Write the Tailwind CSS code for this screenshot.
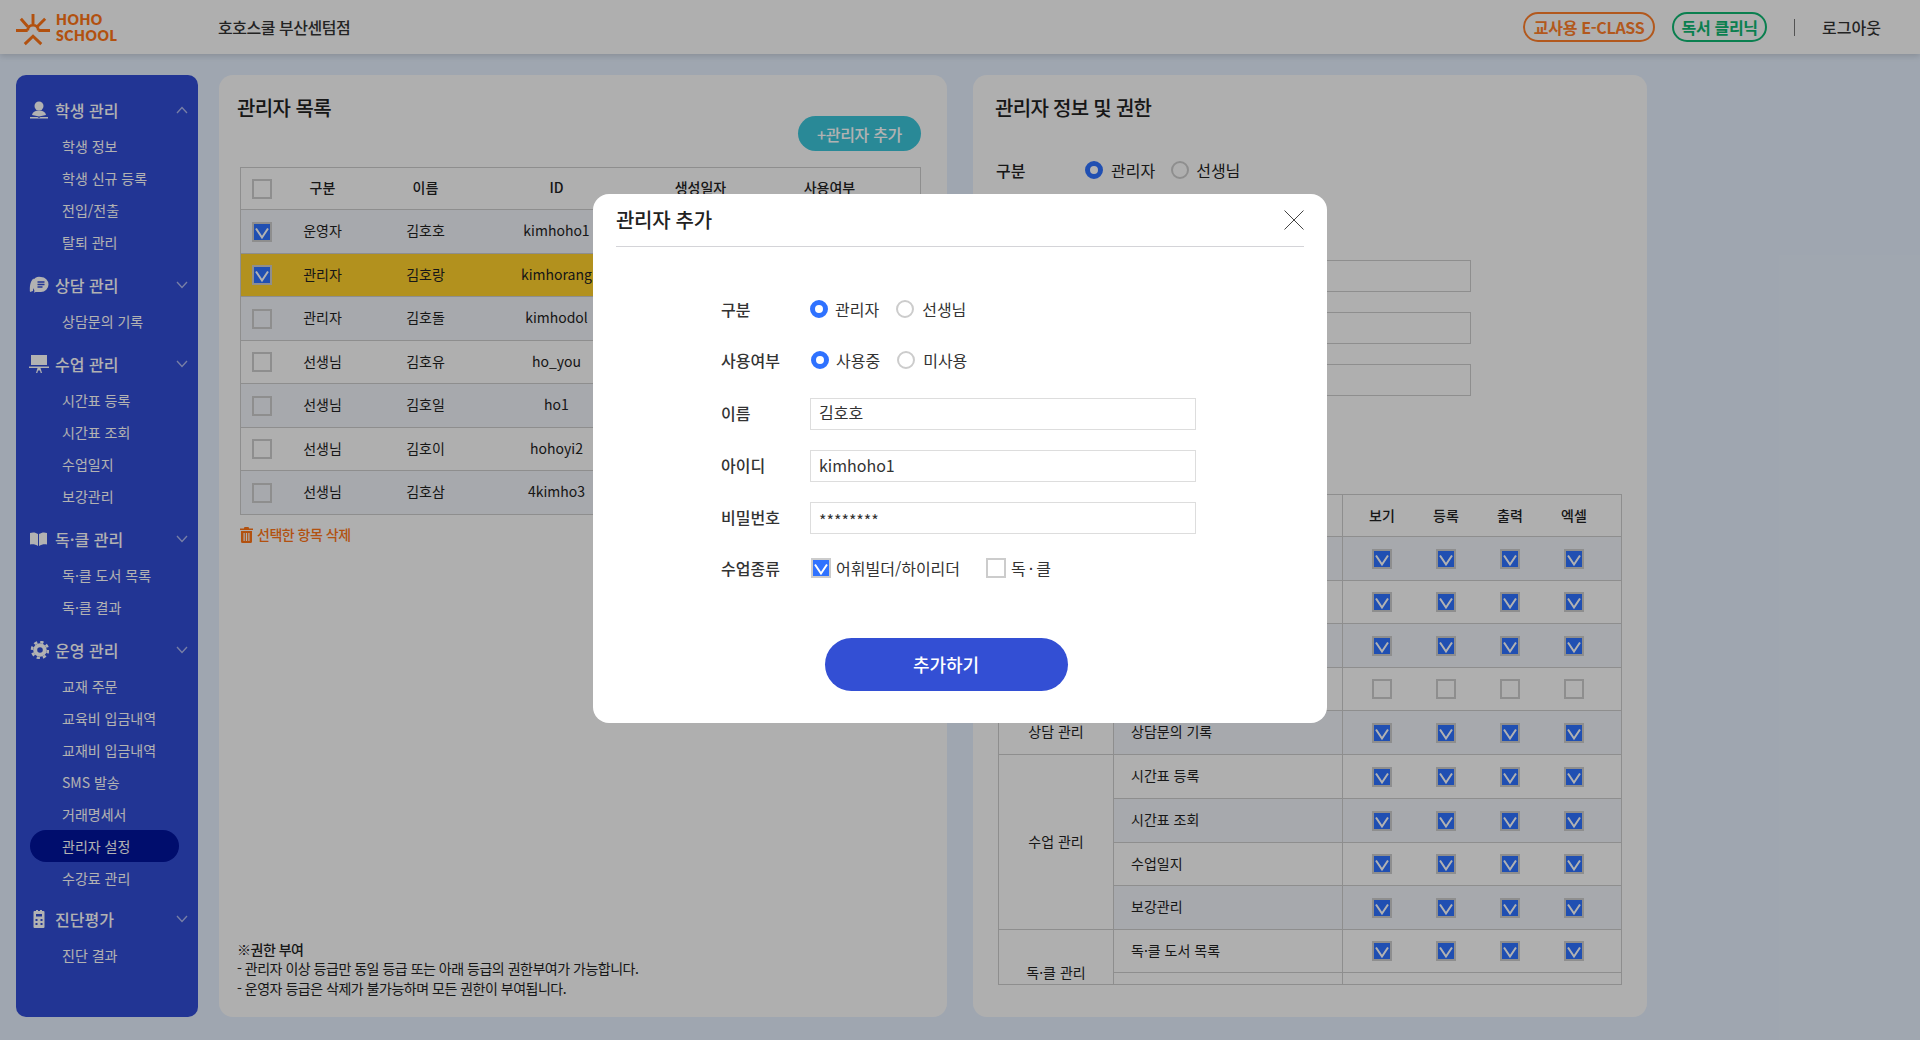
<!DOCTYPE html>
<html lang="ko">
<head>
<meta charset="utf-8">
<title>관리자 설정</title>
<script src="https://cdn.jsdelivr.net/npm/@tailwindcss/browser@4"></script>
</head>
<body class="m-0 h-[1040px] w-[1920px] overflow-hidden bg-[#e4eefc] font-['Noto_Sans_CJK_KR','Noto_Sans',sans-serif] text-[#222] relative">
<svg class="hidden"><symbol id="chk" viewBox="0 0 16 16"><path d="M2 4.500l6 9 6-9" fill="none" stroke="currentColor" stroke-width="2"/></symbol>
<symbol id="chev" viewBox="0 0 12 8"><path d="M1 1l5 5.500L11 1" fill="none" stroke="currentColor" stroke-width="1.300"/></symbol></svg>

<header class="h-[54px] bg-[#fbfbfb] flex items-center shadow-[0_2px_6px_rgba(0,0,0,0.15)] relative">
  <div class="w-[218px] pl-4 flex items-center gap-[5px]">
    <svg class="w-[35px] h-[35px] mt-[4px]" viewBox="16 9 36 34" fill="none" stroke="#ff7516" stroke-width="3"><path d="M16 27h12M39 27h12M33.500 10v11M21 15l7 8M46 15l-8 8M28 27a5.500 5.500 0 0 1 11 0M25 41l8.500-8 8.500 8"/></svg>
    <div class="font-['Lato',sans-serif] font-extrabold text-[14px] leading-[16px] tracking-[0.04em] text-[#ff7516] mt-[1px]"><div>HOHO</div><div>SCHOOL</div></div>
  </div>
  <div class="text-[16px] font-medium tracking-[-0.03em] text-[#333]">호호스쿨 부산센텀점</div>
  <div class="ml-auto pr-[39px] flex items-center">
    <div class="h-[30px] w-[132px] rounded-full border-2 border-[#ff7f2a] text-[#ff7f2a] text-[16px] font-bold tracking-[-0.02em] flex items-center justify-center">교사용 E-CLASS</div>
    <div class="ml-[17px] h-[30px] w-[95px] rounded-full border-2 border-[#0fb772] text-[#0fb772] text-[16px] font-bold tracking-[-0.02em] flex items-center justify-center">독서 클리닉</div>
    <div class="ml-[27px] w-px h-[17px] bg-[#777]"></div>
    <div class="ml-[27px] text-[16px] font-medium text-[#333]">로그아웃</div>
  </div>
</header>

<main class="flex pt-[21px] pl-4 gap-[21px]">
  <!-- sidebar -->
  <nav class="w-[182px] h-[942px] rounded-[10px] bg-[#324cd4] pt-[15px] text-white shrink-0">
    <div class="h-10 flex items-center pl-[13px] pr-[10px] text-[16px] font-medium">
      <svg class="w-[20px] h-[18px] mr-[6px]" viewBox="0 0 20 18" fill="currentColor"><circle cx="10" cy="5" r="4.500"/><path d="M3 14c.5-3 3-4.500 7-4.500s6.500 1.500 7 4.500l-7 1.500z"/><path d="M1 16h7.500l1.500 1 1.500-1H19v1.500H1z"/></svg>
      <span>학생 관리</span>
      <svg class="w-[12px] h-[8px] ml-auto text-white/60 rotate-180"><use href="#chev"/></svg>
    </div>
    <a class="block h-8 leading-8 pl-[46px] text-[14px]">학생 정보</a>
    <a class="block h-8 leading-8 pl-[46px] text-[14px]">학생 신규 등록</a>
    <a class="block h-8 leading-8 pl-[46px] text-[14px]">전입/전출</a>
    <a class="block h-8 leading-8 pl-[46px] text-[14px]">탈퇴 관리</a>

    <div class="mt-[7px] h-10 flex items-center pl-[13px] pr-[10px] text-[16px] font-medium">
      <svg class="w-[20px] h-[18px] mr-[6px]" viewBox="0 0 20 18" fill="currentColor"><path d="M5 2.500C.5 4 .5 14 1 16l3-1z"/><path d="M12 1a7.500 7.500 0 0 1 0 15H7c-.5 0-1 .5-2 .5 .5-1 .5-2 0-3A7.500 7.500 0 0 1 12 1z"/><path d="M8.500 6h7M8.500 8.500h7M8.500 11h5" stroke="#324cd4" stroke-width="1.300"/></svg>
      <span>상담 관리</span>
      <svg class="w-[12px] h-[8px] ml-auto text-white/60"><use href="#chev"/></svg>
    </div>
    <a class="block h-8 leading-8 pl-[46px] text-[14px]">상담문의 기록</a>

    <div class="mt-[7px] h-10 flex items-center pl-[13px] pr-[10px] text-[16px] font-medium">
      <svg class="w-[20px] h-[18px] mr-[6px]" viewBox="0 0 20 18" fill="currentColor"><path d="M2 0h16v10H2z"/><path d="M0 11.500h20V13H0z"/><path d="M7 18l1.500-5h3L13 18h-1.300l-.7-2.500H9L8.300 18z"/></svg>
      <span>수업 관리</span>
      <svg class="w-[12px] h-[8px] ml-auto text-white/60"><use href="#chev"/></svg>
    </div>
    <a class="block h-8 leading-8 pl-[46px] text-[14px]">시간표 등록</a>
    <a class="block h-8 leading-8 pl-[46px] text-[14px]">시간표 조회</a>
    <a class="block h-8 leading-8 pl-[46px] text-[14px]">수업일지</a>
    <a class="block h-8 leading-8 pl-[46px] text-[14px]">보강관리</a>

    <div class="mt-[7px] h-10 flex items-center pl-[13px] pr-[10px] text-[16px] font-medium">
      <svg class="w-[20px] h-[18px] mr-[6px]" viewBox="0 0 20 18" fill="currentColor"><path d="M1 3c3-1 6-.5 8 1v12c-2-1.500-5-2-8-1.500z"/><path d="M18 3c-3-1-5.500-.5-8 1v12c2.500-1.500 5-2 8-1.500z"/></svg>
      <span>독·클 관리</span>
      <svg class="w-[12px] h-[8px] ml-auto text-white/60"><use href="#chev"/></svg>
    </div>
    <a class="block h-8 leading-8 pl-[46px] text-[14px]">독·클 도서 목록</a>
    <a class="block h-8 leading-8 pl-[46px] text-[14px]">독·클 결과</a>

    <div class="mt-[7px] h-10 flex items-center pl-[13px] pr-[10px] text-[16px] font-medium">
      <svg class="w-[20px] h-[18px] mr-[6px]" viewBox="0 0 20 18" fill="none" stroke="currentColor"><circle cx="11" cy="9" r="4.800" stroke-width="4"/><circle cx="11" cy="9" r="8" stroke-width="2.500" stroke-dasharray="3.300 2.980"/></svg>
      <span>운영 관리</span>
      <svg class="w-[12px] h-[8px] ml-auto text-white/60"><use href="#chev"/></svg>
    </div>
    <a class="block h-8 leading-8 pl-[46px] text-[14px]">교재 주문</a>
    <a class="block h-8 leading-8 pl-[46px] text-[14px]">교육비 입금내역</a>
    <a class="block h-8 leading-8 pl-[46px] text-[14px]">교재비 입금내역</a>
    <a class="block h-8 leading-8 pl-[46px] text-[14px]">SMS 발송</a>
    <a class="block h-8 leading-8 pl-[46px] text-[14px]">거래명세서</a>
    <a class="block h-8 leading-8 pl-[32px] ml-[14px] mr-[19px] text-[14px] rounded-full bg-[#00139d]">관리자 설정</a>
    <a class="block h-8 leading-8 pl-[46px] text-[14px]">수강료 관리</a>

    <div class="mt-[5px] h-10 flex items-center pl-[13px] pr-[10px] text-[16px] font-medium">
      <svg class="w-[20px] h-[18px] mr-[6px]" viewBox="0 0 20 18" fill="currentColor"><path fill-rule="evenodd" d="M5.500 1h1.500V0h2v1h2V0h2v1h1.500a1 1 0 0 1 1 1v15a1 1 0 0 1-1 1h-9a1 1 0 0 1-1-1V2a1 1 0 0 1 1-1zM7 4v2.500h6V4zM6.500 9v2h2V9zm5 0v2h2V9zm-5 4v2h2v-2zm5 0v2h2v-2z"/></svg>
      <span>진단평가</span>
      <svg class="w-[12px] h-[8px] ml-auto text-white/60"><use href="#chev"/></svg>
    </div>
    <a class="block h-8 leading-8 pl-[46px] text-[14px]">진단 결과</a>
  </nav>

  <!-- admin list panel -->
  <section class="w-[728px] h-[942px] rounded-[14px] bg-[#fbfbfb] pt-[20px] px-[18px] shrink-0 relative flex flex-col">
    <h2 class="text-[20px] leading-[26px] font-medium tracking-[-0.03em]">관리자 목록</h2>
    <div class="flex justify-end mt-[-5px] pr-[8px]">
      <button class="w-[123px] h-[35px] rounded-full bg-[#3cc5d9] text-white text-[16px] font-medium tracking-[-0.02em]">+관리자 추가</button>
    </div>
    <table class="ml-[3px] mt-[16px] w-[681px] table-fixed border-collapse text-[14px] text-center [&_td:not(:first-child)]:pb-[2px]">
      <colgroup><col class="w-[43px]"><col class="w-[78px]"><col class="w-[128px]"><col class="w-[134px]"><col class="w-[154px]"><col class="w-[104px]"><col></colgroup>
      <tr class="h-[42px] font-medium">
        <td class="border-y border-l border-[#ccc]"><div class="size-5 ml-[11px] border-2 border-[#ccc]"></div></td>
        <td class="border-y border-[#ccc]">구분</td><td class="border-y border-[#ccc]">이름</td><td class="border-y border-[#ccc]">ID</td><td class="border-y border-[#ccc]">생성일자</td><td class="border-y border-[#ccc]">사용여부</td><td class="border-y border-r border-[#ccc]"></td>
      </tr>
      <tr class="h-[44px] bg-[#f0f2f8]">
        <td class="border-y border-l border-[#ccc]"><div class="size-5 ml-[11px] border-2 border-[#ccc] bg-[#2f72ff] text-white"><svg class="size-4"><use href="#chk"/></svg></div></td>
        <td class="border-y border-[#ccc]">운영자</td><td class="border-y border-[#ccc]">김호호</td><td class="border-y border-[#ccc]">kimhoho1</td><td class="border-y border-[#ccc]"></td><td class="border-y border-[#ccc]"></td><td class="border-y border-r border-[#ccc]"></td>
      </tr>
      <tr class="h-[43px] bg-[#ffd02c]">
        <td class="border-y border-l border-[#ccc]"><div class="size-5 ml-[11px] border-2 border-[#ccc] bg-[#2f72ff] text-white"><svg class="size-4"><use href="#chk"/></svg></div></td>
        <td class="border-y border-[#ccc]">관리자</td><td class="border-y border-[#ccc]">김호랑</td><td class="border-y border-[#ccc]">kimhorang</td><td class="border-y border-[#ccc]"></td><td class="border-y border-[#ccc]"></td><td class="border-y border-r border-[#ccc]"></td>
      </tr>
      <tr class="h-[44px] bg-[#f0f2f8]">
        <td class="border-y border-l border-[#ccc]"><div class="size-5 ml-[11px] border-2 border-[#ccc]"></div></td>
        <td class="border-y border-[#ccc]">관리자</td><td class="border-y border-[#ccc]">김호돌</td><td class="border-y border-[#ccc]">kimhodol</td><td class="border-y border-[#ccc]"></td><td class="border-y border-[#ccc]"></td><td class="border-y border-r border-[#ccc]"></td>
      </tr>
      <tr class="h-[43px]">
        <td class="border-y border-l border-[#ccc]"><div class="size-5 ml-[11px] border-2 border-[#ccc]"></div></td>
        <td class="border-y border-[#ccc]">선생님</td><td class="border-y border-[#ccc]">김호유</td><td class="border-y border-[#ccc]">ho_you</td><td class="border-y border-[#ccc]"></td><td class="border-y border-[#ccc]"></td><td class="border-y border-r border-[#ccc]"></td>
      </tr>
      <tr class="h-[44px] bg-[#f0f2f8]">
        <td class="border-y border-l border-[#ccc]"><div class="size-5 ml-[11px] border-2 border-[#ccc]"></div></td>
        <td class="border-y border-[#ccc]">선생님</td><td class="border-y border-[#ccc]">김호일</td><td class="border-y border-[#ccc]">ho1</td><td class="border-y border-[#ccc]"></td><td class="border-y border-[#ccc]"></td><td class="border-y border-r border-[#ccc]"></td>
      </tr>
      <tr class="h-[43px]">
        <td class="border-y border-l border-[#ccc]"><div class="size-5 ml-[11px] border-2 border-[#ccc]"></div></td>
        <td class="border-y border-[#ccc]">선생님</td><td class="border-y border-[#ccc]">김호이</td><td class="border-y border-[#ccc]">hohoyi2</td><td class="border-y border-[#ccc]"></td><td class="border-y border-[#ccc]"></td><td class="border-y border-r border-[#ccc]"></td>
      </tr>
      <tr class="h-[44px] bg-[#f0f2f8]">
        <td class="border-y border-l border-[#ccc]"><div class="size-5 ml-[11px] border-2 border-[#ccc]"></div></td>
        <td class="border-y border-[#ccc]">선생님</td><td class="border-y border-[#ccc]">김호삼</td><td class="border-y border-[#ccc]">4kimho3</td><td class="border-y border-[#ccc]"></td><td class="border-y border-[#ccc]"></td><td class="border-y border-r border-[#ccc]"></td>
      </tr>
    </table>
    <div class="ml-[3px] mt-[9px] flex items-center gap-[4px] text-[14px] font-medium tracking-[-0.035em] text-[#ff7516]">
      <svg class="w-[13px] h-[16px]" viewBox="0 0 13 16" fill="currentColor"><path fill-rule="evenodd" d="M4.500 0h4l.7 1.500H13V3H0V1.500h3.800zM1 4h11v10.500a1.500 1.500 0 0 1-1.500 1.500h-8A1.500 1.500 0 0 1 1 14.500zM3.500 6v8h1.200V6zm2.400 0v8h1.200V6zm2.400 0v8h1.200V6z"/></svg>
      <span>선택한 항목 삭제</span>
    </div>
    <div class="mt-auto mb-[19px] text-[14px] leading-[19.500px] tracking-[-0.035em] text-[#222]">
      <div class="font-medium">※권한 부여</div>
      <div>- 관리자 이상 등급만 동일 등급 또는 아래 등급의 권한부여가 가능합니다.</div>
      <div>- 운영자 등급은 삭제가 불가능하며 모든 권한이 부여됩니다.</div>
    </div>
  </section>

  <!-- admin info panel -->
  <section class="ml-[5px] w-[674px] h-[942px] rounded-[14px] bg-[#fbfbfb] pt-[20px] pl-[22px] shrink-0 relative">
    <h2 class="text-[20px] leading-[26px] font-medium tracking-[-0.035em]">관리자 정보 및 권한</h2>
    <div class="mt-[37px] flex items-center h-6 text-[16px]">
      <span class="w-[90px] font-medium pl-[1px]">구분</span>
      <span class="size-[18px] rounded-full border-[5px] border-[#2f72ff] bg-white"></span><span class="ml-[8px]">관리자</span>
      <span class="ml-[16px] size-[18px] rounded-full border-2 border-[#ccc]"></span><span class="ml-[7px]">선생님</span>
    </div>
    <div class="ml-[90px] mt-[78px] w-[386px] h-8 border border-[#ccc]"></div>
    <div class="ml-[90px] mt-5 w-[386px] h-8 border border-[#ccc]"></div>
    <div class="ml-[90px] mt-5 w-[386px] h-8 border border-[#ccc]"></div>
    <div class="ml-[3px] mt-[98px] w-[624px] h-[491px] overflow-hidden border-b border-[#ccc]">
      <table class="w-[624px] table-fixed border-collapse text-[14px] [&_td:not(:last-child)]:pb-[2px]">
        <colgroup><col class="w-[115px]"><col class="w-[229px]"><col></colgroup>
        <tr class="h-[42px] font-medium text-center"><td class="border border-[#ccc]">메뉴</td><td class="border border-[#ccc]">상세 메뉴</td>
          <td class="border border-[#ccc]"><div class="flex pl-[7px]"><span class="w-16">보기</span><span class="w-16">등록</span><span class="w-16">출력</span><span class="w-16">엑셀</span></div></td></tr>
        <tr class="h-[44px] bg-[#f0f2f8]"><td rowspan="4" class="border border-[#ccc] bg-[#fbfbfb] text-center">학생 관리</td><td class="border border-[#ccc] pl-[17px]">학생 정보</td>
          <td class="border border-[#ccc]"><div class="flex pl-[7px]"><span class="w-16 flex justify-center"><span class="size-5 border-2 border-[#ccc] bg-[#2f72ff] text-white"><svg class="size-4"><use href="#chk"/></svg></span></span><span class="w-16 flex justify-center"><span class="size-5 border-2 border-[#ccc] bg-[#2f72ff] text-white"><svg class="size-4"><use href="#chk"/></svg></span></span><span class="w-16 flex justify-center"><span class="size-5 border-2 border-[#ccc] bg-[#2f72ff] text-white"><svg class="size-4"><use href="#chk"/></svg></span></span><span class="w-16 flex justify-center"><span class="size-5 border-2 border-[#ccc] bg-[#2f72ff] text-white"><svg class="size-4"><use href="#chk"/></svg></span></span></div></td></tr>
        <tr class="h-[43px]"><td class="border border-[#ccc] pl-[17px]">학생 신규 등록</td>
          <td class="border border-[#ccc]"><div class="flex pl-[7px]"><span class="w-16 flex justify-center"><span class="size-5 border-2 border-[#ccc] bg-[#2f72ff] text-white"><svg class="size-4"><use href="#chk"/></svg></span></span><span class="w-16 flex justify-center"><span class="size-5 border-2 border-[#ccc] bg-[#2f72ff] text-white"><svg class="size-4"><use href="#chk"/></svg></span></span><span class="w-16 flex justify-center"><span class="size-5 border-2 border-[#ccc] bg-[#2f72ff] text-white"><svg class="size-4"><use href="#chk"/></svg></span></span><span class="w-16 flex justify-center"><span class="size-5 border-2 border-[#ccc] bg-[#2f72ff] text-white"><svg class="size-4"><use href="#chk"/></svg></span></span></div></td></tr>
        <tr class="h-[44px] bg-[#f0f2f8]"><td class="border border-[#ccc] pl-[17px]">전입/전출</td>
          <td class="border border-[#ccc]"><div class="flex pl-[7px]"><span class="w-16 flex justify-center"><span class="size-5 border-2 border-[#ccc] bg-[#2f72ff] text-white"><svg class="size-4"><use href="#chk"/></svg></span></span><span class="w-16 flex justify-center"><span class="size-5 border-2 border-[#ccc] bg-[#2f72ff] text-white"><svg class="size-4"><use href="#chk"/></svg></span></span><span class="w-16 flex justify-center"><span class="size-5 border-2 border-[#ccc] bg-[#2f72ff] text-white"><svg class="size-4"><use href="#chk"/></svg></span></span><span class="w-16 flex justify-center"><span class="size-5 border-2 border-[#ccc] bg-[#2f72ff] text-white"><svg class="size-4"><use href="#chk"/></svg></span></span></div></td></tr>
        <tr class="h-[43px]"><td class="border border-[#ccc] pl-[17px]">탈퇴 관리</td>
          <td class="border border-[#ccc]"><div class="flex pl-[7px]"><span class="w-16 flex justify-center"><span class="size-5 border-2 border-[#ccc]"></span></span><span class="w-16 flex justify-center"><span class="size-5 border-2 border-[#ccc]"></span></span><span class="w-16 flex justify-center"><span class="size-5 border-2 border-[#ccc]"></span></span><span class="w-16 flex justify-center"><span class="size-5 border-2 border-[#ccc]"></span></span></div></td></tr>
        <tr class="h-[44px] bg-[#f0f2f8]"><td class="border border-[#ccc] bg-[#fbfbfb] text-center">상담 관리</td><td class="border border-[#ccc] pl-[17px]">상담문의 기록</td>
          <td class="border border-[#ccc]"><div class="flex pl-[7px]"><span class="w-16 flex justify-center"><span class="size-5 border-2 border-[#ccc] bg-[#2f72ff] text-white"><svg class="size-4"><use href="#chk"/></svg></span></span><span class="w-16 flex justify-center"><span class="size-5 border-2 border-[#ccc] bg-[#2f72ff] text-white"><svg class="size-4"><use href="#chk"/></svg></span></span><span class="w-16 flex justify-center"><span class="size-5 border-2 border-[#ccc] bg-[#2f72ff] text-white"><svg class="size-4"><use href="#chk"/></svg></span></span><span class="w-16 flex justify-center"><span class="size-5 border-2 border-[#ccc] bg-[#2f72ff] text-white"><svg class="size-4"><use href="#chk"/></svg></span></span></div></td></tr>
        <tr class="h-[44px]"><td rowspan="4" class="border border-[#ccc] text-center">수업 관리</td><td class="border border-[#ccc] pl-[17px]">시간표 등록</td>
          <td class="border border-[#ccc]"><div class="flex pl-[7px]"><span class="w-16 flex justify-center"><span class="size-5 border-2 border-[#ccc] bg-[#2f72ff] text-white"><svg class="size-4"><use href="#chk"/></svg></span></span><span class="w-16 flex justify-center"><span class="size-5 border-2 border-[#ccc] bg-[#2f72ff] text-white"><svg class="size-4"><use href="#chk"/></svg></span></span><span class="w-16 flex justify-center"><span class="size-5 border-2 border-[#ccc] bg-[#2f72ff] text-white"><svg class="size-4"><use href="#chk"/></svg></span></span><span class="w-16 flex justify-center"><span class="size-5 border-2 border-[#ccc] bg-[#2f72ff] text-white"><svg class="size-4"><use href="#chk"/></svg></span></span></div></td></tr>
        <tr class="h-[44px] bg-[#f0f2f8]"><td class="border border-[#ccc] pl-[17px]">시간표 조회</td>
          <td class="border border-[#ccc]"><div class="flex pl-[7px]"><span class="w-16 flex justify-center"><span class="size-5 border-2 border-[#ccc] bg-[#2f72ff] text-white"><svg class="size-4"><use href="#chk"/></svg></span></span><span class="w-16 flex justify-center"><span class="size-5 border-2 border-[#ccc] bg-[#2f72ff] text-white"><svg class="size-4"><use href="#chk"/></svg></span></span><span class="w-16 flex justify-center"><span class="size-5 border-2 border-[#ccc] bg-[#2f72ff] text-white"><svg class="size-4"><use href="#chk"/></svg></span></span><span class="w-16 flex justify-center"><span class="size-5 border-2 border-[#ccc] bg-[#2f72ff] text-white"><svg class="size-4"><use href="#chk"/></svg></span></span></div></td></tr>
        <tr class="h-[43px]"><td class="border border-[#ccc] pl-[17px]">수업일지</td>
          <td class="border border-[#ccc]"><div class="flex pl-[7px]"><span class="w-16 flex justify-center"><span class="size-5 border-2 border-[#ccc] bg-[#2f72ff] text-white"><svg class="size-4"><use href="#chk"/></svg></span></span><span class="w-16 flex justify-center"><span class="size-5 border-2 border-[#ccc] bg-[#2f72ff] text-white"><svg class="size-4"><use href="#chk"/></svg></span></span><span class="w-16 flex justify-center"><span class="size-5 border-2 border-[#ccc] bg-[#2f72ff] text-white"><svg class="size-4"><use href="#chk"/></svg></span></span><span class="w-16 flex justify-center"><span class="size-5 border-2 border-[#ccc] bg-[#2f72ff] text-white"><svg class="size-4"><use href="#chk"/></svg></span></span></div></td></tr>
        <tr class="h-[44px] bg-[#f0f2f8]"><td class="border border-[#ccc] pl-[17px]">보강관리</td>
          <td class="border border-[#ccc]"><div class="flex pl-[7px]"><span class="w-16 flex justify-center"><span class="size-5 border-2 border-[#ccc] bg-[#2f72ff] text-white"><svg class="size-4"><use href="#chk"/></svg></span></span><span class="w-16 flex justify-center"><span class="size-5 border-2 border-[#ccc] bg-[#2f72ff] text-white"><svg class="size-4"><use href="#chk"/></svg></span></span><span class="w-16 flex justify-center"><span class="size-5 border-2 border-[#ccc] bg-[#2f72ff] text-white"><svg class="size-4"><use href="#chk"/></svg></span></span><span class="w-16 flex justify-center"><span class="size-5 border-2 border-[#ccc] bg-[#2f72ff] text-white"><svg class="size-4"><use href="#chk"/></svg></span></span></div></td></tr>
        <tr class="h-[43px]"><td rowspan="2" class="border border-[#ccc] text-center">독·클 관리</td><td class="border border-[#ccc] pl-[17px]">독·클 도서 목록</td>
          <td class="border border-[#ccc]"><div class="flex pl-[7px]"><span class="w-16 flex justify-center"><span class="size-5 border-2 border-[#ccc] bg-[#2f72ff] text-white"><svg class="size-4"><use href="#chk"/></svg></span></span><span class="w-16 flex justify-center"><span class="size-5 border-2 border-[#ccc] bg-[#2f72ff] text-white"><svg class="size-4"><use href="#chk"/></svg></span></span><span class="w-16 flex justify-center"><span class="size-5 border-2 border-[#ccc] bg-[#2f72ff] text-white"><svg class="size-4"><use href="#chk"/></svg></span></span><span class="w-16 flex justify-center"><span class="size-5 border-2 border-[#ccc] bg-[#2f72ff] text-white"><svg class="size-4"><use href="#chk"/></svg></span></span></div></td></tr>
        <tr class="h-[44px]"><td class="border border-[#ccc] pl-[17px]"></td><td class="border border-[#ccc]"></td></tr>
      </table>
    </div>
  </section>
</main>

<!-- dim overlay and dialog -->
<div class="absolute inset-0 bg-black/30"></div>
<div class="absolute left-[593px] top-[194px] w-[734px] h-[529px] rounded-[16px] bg-white text-[#333] flex flex-col">
  <div class="mx-[23px] h-[53px] border-b border-[#d4d4d8] flex items-center justify-between">
    <h2 class="text-[20px] font-medium tracking-[-0.015em] text-[#222]">관리자 추가</h2>
    <svg class="w-[20px] h-[20px]" viewBox="0 0 20 20" fill="none" stroke="#444" stroke-width="1"><path d="M0.500 0.500l19 19M19.500 0.500l-19 19"/></svg>
  </div>
  <div class="pl-[128px] pt-[50px] text-[16px]">
    <div class="flex items-center h-6">
      <span class="w-[89px] font-medium">구분</span>
      <span class="size-[18px] rounded-full border-[5px] border-[#2f72ff]"></span><span class="ml-[7px]">관리자</span>
      <span class="ml-[17px] size-[18px] rounded-full border-2 border-[#ccc]"></span><span class="ml-[8px]">선생님</span>
    </div>
    <div class="flex items-center h-6 mt-[27px]">
      <span class="w-[90px] font-medium">사용여부</span>
      <span class="size-[18px] rounded-full border-[5px] border-[#2f72ff]"></span><span class="ml-[7px]">사용중</span>
      <span class="ml-[17px] size-[18px] rounded-full border-2 border-[#ccc]"></span><span class="ml-[8px]">미사용</span>
    </div>
    <div class="flex items-center mt-[26px]">
      <span class="w-[89px] font-medium -mt-[3px]">이름</span>
      <div class="w-[386px] h-8 border border-[#ddd] pl-[8px] leading-[26px]">김호호</div>
    </div>
    <div class="flex items-center mt-5">
      <span class="w-[89px] font-medium -mt-[3px]">아이디</span>
      <div class="w-[386px] h-8 border border-[#ddd] pl-[8px] leading-[28px]">kimhoho1</div>
    </div>
    <div class="flex items-center mt-5">
      <span class="w-[89px] font-medium -mt-[3px]">비밀번호</span>
      <div class="w-[386px] h-8 border border-[#ddd] pl-[8px] leading-[34px]">********</div>
    </div>
    <div class="flex items-center mt-[24px] h-5">
      <span class="w-[90px] font-medium">수업종류</span>
      <span class="size-5 border-2 border-[#ccc] bg-[#2f72ff] text-white"><svg class="size-4"><use href="#chk"/></svg></span><span class="ml-[5px]">어휘빌더/하이리더</span>
      <span class="ml-[26px] size-5 border-2 border-[#ccc]"></span><span class="ml-[5px]">독<span class="mx-[3px]">·</span>클</span>
    </div>
  </div>
  <button class="self-center -ml-[28px] mt-[60px] w-[243px] h-[53px] rounded-full bg-[#334fd4] text-white text-[18px] font-medium">추가하기</button>
</div>
</body>
</html>
